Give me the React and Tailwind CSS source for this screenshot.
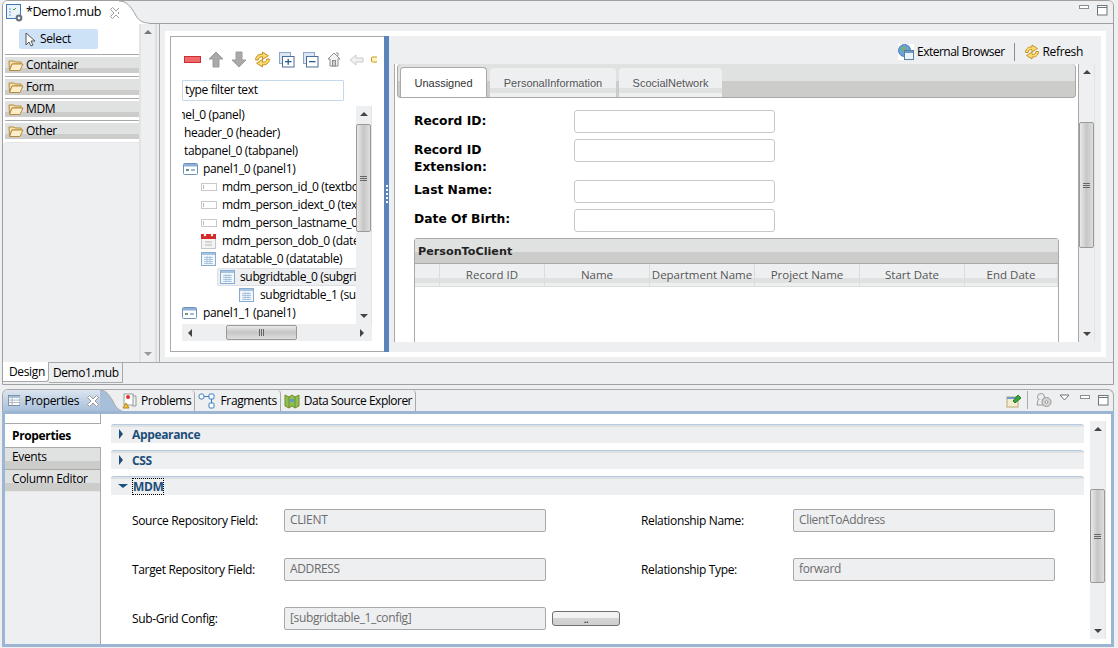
import React from "react";

const F = "[font-family:'Open_Sans',sans-serif] tracking-[-0.35px]";

function Cross({ className = "" }) {
  return (
    <svg width="14" height="14" viewBox="0 0 14 14" className={className}>
      <path d="M1.500 3.500l2-2 3.500 3.500 3.500-3.500 2 2-3.500 3.500 3.500 3.500-2 2-3.500-3.500-3.500 3.500-2-2 3.500-3.500z" fill="#fff" stroke="#9a9a9a" />
    </svg>
  );
}
function Min() {
  return <svg width="11" height="6" viewBox="0 0 11 6"><rect x=".5" y=".5" width="9" height="3" fill="#fff" stroke="#8a8f96" /></svg>;
}
function Max() {
  return <svg width="11" height="11" viewBox="0 0 11 11"><rect x=".5" y=".5" width="9.5" height="9.5" fill="#fff" stroke="#6f757c" /><path d="M1 2.5h9" stroke="#6f757c" /></svg>;
}
function Folder() {
  return (
    <svg width="16" height="14" viewBox="0 0 16 14">
      <path d="M1 3h5l1 1h6v2H4L1.5 12z" fill="#f8e3b0" stroke="#b58b3c" />
      <path d="M1.5 12.500L4 6h11l-3 6.500z" fill="#fbeec9" stroke="#b58b3c" />
    </svg>
  );
}
function Refresh({ s = 17 }) {
  return (
    <svg width={s} height={s} viewBox="0 0 16 16" className="shrink-0">
      <path d="M1.500 8.500C1.500 4.500 5 2.500 8 3V1l5.500 3.500L8 8V5.500C6 5.200 4.500 6 4 8.500z" fill="#fbdc6a" stroke="#c08a1e" strokeWidth=".9" />
      <path d="M14.500 7.500C14.500 11.500 11 13.500 8 13v2l-5.500-3.500L8 8v2.500c2 .3 3.500-.5 4-3z" fill="#fbdc6a" stroke="#c08a1e" strokeWidth=".9" />
    </svg>
  );
}
function PanelIcon() {
  return (
    <svg width="15" height="14" viewBox="0 0 15 14">
      <rect x=".5" y="1.500" width="14" height="11" rx="1" fill="#fff" stroke="#6d93bd" />
      <rect x="1" y="2" width="13" height="2.500" fill="#8fb0d6" />
      <path d="M3 8h3" stroke="#3c6d3c" strokeWidth="1.4" /><path d="M8 8h4" stroke="#7d9fc9" strokeWidth="1.4" />
    </svg>
  );
}
function TextIcon() {
  return <svg width="16" height="8" viewBox="0 0 16 8"><rect x=".5" y=".5" width="15" height="7" fill="#fff" stroke="#c9c9c9" /><path d="M2.500 2v4" stroke="#bbb" /></svg>;
}
function CalIcon() {
  return (
    <svg width="15" height="16" viewBox="0 0 15 16">
      <rect x=".5" y="1.500" width="14" height="14" fill="#f4f4f4" stroke="#c6c6c6" />
      <rect x="0" y="1" width="15" height="5" fill="#d52b2b" />
      <circle cx="4" cy="2" r="1.200" fill="#fff" /><circle cx="11" cy="2" r="1.200" fill="#fff" />
      <path d="M4 9h7M4 12h7" stroke="#b5b5b5" />
    </svg>
  );
}
function TableIcon() {
  return (
    <svg width="15" height="14" viewBox="0 0 15 14">
      <rect x=".5" y=".5" width="14" height="13" fill="#f2f7fc" stroke="#88acd1" />
      <rect x="1" y="1" width="13" height="2" fill="#a6c4e0" />
      <path d="M3 5.500h9M3 7.500h9M3 9.500h9M3 11.500h9M6 4v8M9 4v8" stroke="#9dbbd9" strokeWidth=".8" />
    </svg>
  );
}
function UpArrow({ down }) {
  return (
    <svg width="16" height="17" viewBox="0 0 16 17" className={down ? "rotate-180 shrink-0" : "shrink-0"}>
      <path d="M8 1l7 7h-4v8H5V8H1z" fill="#a9a9a9" stroke="#9c9c9c" />
    </svg>
  );
}
function PlusBox({ minus }) {
  return (
    <svg width="16" height="16" viewBox="0 0 16 16" className="shrink-0 ml-[1px]">
      <rect x=".5" y=".5" width="11" height="11" fill="#dce7f3" stroke="#8aa7c6" />
      <rect x="3.500" y="4.500" width="11.500" height="10.500" fill="#fff" stroke="#4a6f97" />
      <path d="M6 9.700h6.500" stroke="#2c5a88" strokeWidth="1.300" />
      {!minus && <path d="M9.200 6.700v6" stroke="#2c5a88" strokeWidth="1.300" />}
    </svg>
  );
}
function Home() {
  return (
    <svg width="14" height="15" viewBox="0 0 14 15" className="shrink-0 ml-[1px]">
      <path d="M7 1L1 7h2v7h8V7h2zM9 1h2v3" fill="#f3f3f3" stroke="#8f8f8f" />
      <rect x="5.500" y="8.500" width="3" height="5.500" fill="#cfcfcf" stroke="#8f8f8f" />
    </svg>
  );
}
function Scroll({ w = "w-[16px]", thumbTop = 0, thumbH = 100, arrowUp = "border-b-[#444]", arrowDown = "border-t-[#444]" }) {
  return (
    <div className={`${w} bg-[#eeeff1] flex flex-col items-stretch shrink-0 border-r border-[#e2e3e5]`}>
      <div className="h-[16px] flex items-center justify-center shrink-0">
        <div className={`w-0 h-0 border-x-[4px] border-x-transparent border-b-[4px] ${arrowUp}`} />
      </div>
      <div className="flex-1 flex flex-col min-h-0">
        <div style={{ height: thumbTop }} className="shrink-0" />
        {thumbH > 0 && (
          <div style={{ height: thumbH }} className="shrink-0 border border-[#9a9a9a] rounded-[2px] bg-[linear-gradient(to_right,#e9e9e9,#c6c6c6_50%,#dedede)] flex flex-col gap-[1px] items-center justify-center">
            <div className="w-[7px] h-[1px] bg-[#666]" /><div className="w-[7px] h-[1px] bg-[#666]" /><div className="w-[7px] h-[1px] bg-[#666]" />
          </div>
        )}
      </div>
      <div className="h-[16px] flex items-center justify-center shrink-0">
        <div className={`w-0 h-0 border-x-[4px] border-x-transparent border-t-[4px] ${arrowDown}`} />
      </div>
    </div>
  );
}

function PaletteGroup({ label }) {
  return (
    <div className="h-[22px] border-t border-[#a8a8a8] pt-[1px] bg-white">
      <div className="h-[16px] mt-[1px] flex items-center gap-[2px] pl-[3px] bg-[linear-gradient(to_bottom,#e0e1e1_0%,#e0e1e1_68%,#cccccb_68%,#cccccb_100%)]">
        <Folder />
        <span className="text-[12px] text-black leading-none">{label}</span>
      </div>
    </div>
  );
}

function TreeRow({ indent, icon, children, selected, gap = "w-[20px]" }) {
  return (
    <div className="h-[18px] flex items-center whitespace-nowrap relative" style={{ paddingLeft: indent }}>
      {selected ? (
        <div className="flex items-center h-[18px] w-[200px] bg-[#eeeff1] border border-[#dcdfe3] rounded-[2px] -ml-[3px] pl-[2px]">
          <span className="w-[20px] shrink-0 flex">{icon}</span>
          <span className="text-[12px] text-black">{children}</span>
        </div>
      ) : (
        <>
          {icon && <span className={`shrink-0 flex ${gap}`}>{icon}</span>}
          <span className="text-[12px] text-black">{children}</span>
        </>
      )}
    </div>
  );
}

function FormRow({ h, label, mb, pt = "pt-[3px]" }) {
  return (
    <div className={`flex ${h} ${mb}`}>
      <div className={`w-[160px] font-['DejaVu_Sans',sans-serif] font-bold text-[12.3px] tracking-normal leading-[17px] text-black ${pt}`}>{label}</div>
      <div className="w-[201px] h-[23px] bg-white border border-[#c9c9c9] rounded-[3px]" />
    </div>
  );
}

function InnerTab({ label, active, w }) {
  return active ? (
    <div className={`${w} h-[30px] pt-[1px] bg-white border border-b-0 border-[#a9a9a9] rounded-t-[4px] flex items-center justify-center font-['Liberation_Sans',sans-serif] tracking-normal text-[11px] text-[#333]`}>{label}</div>
  ) : (
    <div className={`${w} h-[29px] pt-[1px] mt-[1px] rounded-t-[4px] bg-[linear-gradient(to_bottom,#eeeff1_0%,#eeeff1_68%,#e0e1e1_68%,#e0e1e1_85%,#eeeff1_85%)] flex items-center justify-center font-['Liberation_Sans',sans-serif] tracking-normal text-[11px] text-[#555]`}>{label}</div>
  );
}

function SectionHead({ open, label, focus }) {
  return (
    <div className="h-[19px] border-t border-[#b5cbe2] rounded-t-[3px] bg-[linear-gradient(to_bottom,#dfe0e1_0,#dfe0e1_2px,#eeeff1_2px)] flex items-center pl-[7px]">
      {open ? (
        <div className="w-0 h-0 border-x-[5px] border-x-transparent border-t-[4px] border-t-[#1d4e79] mr-[5px]" />
      ) : (
        <div className="w-0 h-0 border-y-[5px] border-y-transparent border-l-[4px] border-l-[#1d4e79] ml-[1px] mr-[9px]" />
      )}
      <span className={`text-[12px] font-bold text-[#1d4e79] leading-[15px] ${focus ? "outline outline-1 outline-dotted outline-black" : ""}`}>{label}</span>
    </div>
  );
}

function Field({ label, value, w = "w-[152px]", iw = "w-[262px]" }) {
  return (
    <div className="flex items-center h-[23px]">
      <span className={`${w} text-[12px] text-black shrink-0`}>{label}</span>
      <div className={`${iw} h-[23px] bg-[#eeeff1] border border-[#a9a9a9] rounded-[2px] pl-[5px] text-[12px] text-[#6d6d6d] leading-[19px]`}>{value}</div>
    </div>
  );
}

const COLS = ["Record ID", "Name", "Department Name", "Project Name", "Start Date", "End Date"];

export default function App() {
  return (
    <div className={`w-[1118px] h-[648px] bg-[#eeeff1] overflow-hidden flex flex-col ${F}`}>
      {/* editor pane */}
      <div className="mx-[2px] h-[385px] shrink-0 border border-[#a0a0a0] rounded-t-[6px] flex flex-col overflow-hidden w-[1112px]">
        <div className="h-[23px] shrink-0 flex items-stretch relative border-b border-[#a0a0a0] bg-[#eeeff1]">
          <div className="flex items-center bg-white pl-[3px] w-[117px] -mb-[1px] relative z-10 rounded-tl-[5px]">
            <svg width="18" height="18" viewBox="0 0 18 18" className="shrink-0">
              <rect x=".5" y=".5" width="14" height="14" fill="#eaf2fa" stroke="#3b78b5" />
              <path d="M3 5h2M3 8h2M3 11h2" stroke="#7a9cc0" /><path d="M7 5l1 1 2-2" stroke="#3f9f3f" fill="none" />
              <circle cx="13" cy="14" r="3.400" fill="#6a7480" /><circle cx="13" cy="14" r="1.200" fill="#fff" />
            </svg>
            <span className="text-[12.5px] tracking-[-0.45px] text-black ml-[2px] whitespace-nowrap">*Demo1.mub</span>
            <Cross className="ml-[8px] shrink-0" />
          </div>
          <svg width="30" height="23" viewBox="0 0 30 23" className="-ml-[1px] -mb-[1px] relative z-10 shrink-0">
            <path d="M0 0C8 0 12 6 16 13C19 19 23 22 30 22V23H0z" fill="#fff" />
            <path d="M0 0C8 0 12 6 16 13C19 19 23 22 30 22" fill="none" stroke="#a0a0a0" />
          </svg>
          <div className="flex-1" />
          <div className="flex items-start gap-[7px] pr-[5px] pt-[4px]"><Min /><Max /></div>
        </div>

        <div className="flex flex-1 min-h-0">
          {/* palette */}
          <div className="w-[136px] shrink-0 flex flex-col">
            <div className="h-[30px] pt-[5px] pl-[16px] shrink-0 bg-white">
              <div className="w-[79px] h-[20px] bg-[#cde2f6] rounded-[2px] flex items-center pl-[6px] gap-[4px]">
                <svg width="11" height="15" viewBox="0 0 11 15"><path d="M1 1v12l3-3 2 4 2-1-2-4h4z" fill="#fff" stroke="#555" /></svg>
                <span className="text-[12px] text-black">Select</span>
              </div>
            </div>
            <div className="pl-[2px] bg-white">
              <PaletteGroup label="Container" />
              <PaletteGroup label="Form" />
              <PaletteGroup label="MDM" />
              <PaletteGroup label="Other" />
              <div className="border-t border-[#e6e6e6]" />
            </div>
          </div>
          <div className="w-[2px] bg-[#e3e3e3] shrink-0" />
          <Scroll w="w-[15px]" thumbH={0} arrowUp="border-b-[#777]" arrowDown="border-t-[#999]" />
          <div className="w-[3px] border-l border-[#dcdcdc] shrink-0" />
          <div className="w-[1px] bg-[#a9a9a9] shrink-0" />

          {/* design area */}
          <div className="flex-1 flex flex-col pl-[5px] pr-[7px] pt-[7px] min-w-0">
            <div className="h-[326px] bg-white pl-[5px] pr-[5px] pt-[5px] shrink-0">
              <div className="h-[316px] flex">
                {/* outline */}
                <div className="w-[214px] shrink-0 bg-white border-y border-l border-[#a9a9a9] pl-[11px] flex flex-col">
                  <div className="h-[43px] flex items-center gap-[7px] pt-[2px] pl-[2px] overflow-hidden shrink-0 pr-[5px]">
                    <svg width="17" height="7" viewBox="0 0 17 7" className="shrink-0"><rect x=".5" y=".5" width="16" height="6" fill="#ee6a6a" stroke="#d02f2f" /></svg>
                    <UpArrow /><UpArrow down />
                    <Refresh />
                    <PlusBox /><PlusBox minus />
                    <Home />
                    <svg width="15" height="12" viewBox="0 0 15 12" className="shrink-0 ml-[1px]"><path d="M7 1L1 6l6 5V8h7V4H7z" fill="#f1f1f1" stroke="#c9c9c9" /></svg>
                    <svg width="6" height="7" viewBox="0 0 6 7" className="shrink-0"><rect x=".5" y="1" width="8" height="5" rx="1" fill="#fff3c0" stroke="#c79a1e" /></svg>
                  </div>
                  <div className="w-[162px] h-[21px] border border-[#c6d9ea] rounded-[1px] text-[12px] text-black pl-[2px] leading-[18px] shrink-0">type filter text</div>
                  <div className="flex mt-[5px] h-[218px] shrink-0 w-[190px]">
                    <div className="w-[174px] overflow-hidden shrink-0">
                      <div className="-ml-[22px] w-[300px]">
                        <TreeRow indent={5}>panel_0 (panel)</TreeRow>
                        <TreeRow indent={24}>header_0 (header)</TreeRow>
                        <TreeRow indent={24}>tabpanel_0 (tabpanel)</TreeRow>
                        <TreeRow indent={23} icon={<PanelIcon />}>panel1_0 (panel1)</TreeRow>
                        <TreeRow indent={41} gap="w-[21px]" icon={<TextIcon />}>mdm_person_id_0 (textbox)</TreeRow>
                        <TreeRow indent={41} gap="w-[21px]" icon={<TextIcon />}>mdm_person_idext_0 (textbox)</TreeRow>
                        <TreeRow indent={41} gap="w-[21px]" icon={<TextIcon />}>mdm_person_lastname_0 (textbox)</TreeRow>
                        <TreeRow indent={41} gap="w-[21px]" icon={<CalIcon />}>mdm_person_dob_0 (date)</TreeRow>
                        <TreeRow indent={41} gap="w-[21px]" icon={<TableIcon />}>datatable_0 (datatable)</TreeRow>
                        <TreeRow indent={60} icon={<TableIcon />} selected>subgridtable_0 (subgridtable)</TreeRow>
                        <TreeRow indent={79} gap="w-[21px]" icon={<TableIcon />}>subgridtable_1 (subgridtable)</TreeRow>
                        <TreeRow indent={22} gap="w-[21px]" icon={<PanelIcon />}>panel1_1 (panel1)</TreeRow>
                      </div>
                    </div>
                    <Scroll thumbTop={2} thumbH={108} />
                  </div>
                  <div className="h-[17px] w-[190px] bg-[#eeeff1] flex items-center shrink-0">
                    <div className="w-[16px] flex justify-center"><div className="w-0 h-0 border-y-[4px] border-y-transparent border-r-[4px] border-r-[#444]" /></div>
                    <div className="w-[28px]" />
                    <div className="w-[71px] h-[15px] border border-[#9a9a9a] rounded-[2px] bg-[linear-gradient(to_bottom,#e9e9e9,#c6c6c6_50%,#dedede)] flex items-center justify-center gap-[1px]">
                      <div className="w-[1px] h-[7px] bg-[#666]" /><div className="w-[1px] h-[7px] bg-[#666]" /><div className="w-[1px] h-[7px] bg-[#666]" />
                    </div>
                    <div className="flex-1" />
                    <div className="w-[20px] flex justify-center"><div className="w-0 h-0 border-y-[4px] border-y-transparent border-l-[4px] border-l-[#444]" /></div>
                  </div>
                </div>
                {/* sash */}
                <div className="w-[5px] shrink-0 bg-[#5b84bd] flex flex-col items-center justify-center gap-[2px]">
                  <div className="w-[2px] h-[2px] bg-white" /><div className="w-[2px] h-[2px] bg-white" /><div className="w-[2px] h-[2px] bg-white" /><div className="w-[2px] h-[2px] bg-white" /><div className="w-[2px] h-[2px] bg-white" />
                </div>
                {/* preview */}
                <div className="flex-1 bg-[#eeeff1] flex flex-col min-w-0">
                  <div className="h-[28px] shrink-0 flex items-center justify-end pr-[18px] pt-[4px]">
                    <span className="bg-white flex mr-[3px]">
                      <svg width="16" height="16" viewBox="0 0 16 16">
                        <circle cx="6.500" cy="6.500" r="6" fill="#6aa3d8" stroke="#4a7cae" /><path d="M3 4l3-2 2 3-3 3zM8 8l3 1-2 3z" fill="#7fb069" />
                        <rect x="6.500" y="6.500" width="9" height="9" fill="#eaf3fb" stroke="#5c7f9f" /><rect x="7" y="7" width="8" height="2" fill="#6c9bc9" />
                      </svg>
                    </span>
                    <span className="text-[12px] tracking-[-0.5px] text-black">External Browser</span>
                    <span className="w-[1px] h-[18px] bg-[#8d8d8d] mx-[9px]" />
                    <Refresh s={16} />
                    <span className="text-[12px] text-black ml-[3px]">Refresh</span>
                  </div>
                  <div className="flex flex-1 min-h-0 pl-[5px] overflow-hidden">
                    <div className="w-[684px] shrink-0 bg-white border-l border-[#a9a9a9] overflow-hidden h-[278px]">
                      <div className="h-[34px] ml-[2px] border border-t-0 border-[#a9a9a9] rounded-[4px] bg-[linear-gradient(to_bottom,#e0e1e1_0%,#e0e1e1_52%,#cccccb_52%,#cccccb_100%)] flex items-start gap-[3px] pl-[2px] pt-[3px] w-[679px]">
                        <InnerTab label="Unassigned" active w="w-[87px]" />
                        <InnerTab label="PersonalInformation" w="w-[126px]" />
                        <InnerTab label="ScocialNetwork" w="w-[103px]" />
                      </div>
                      <div className="pl-[19px] pt-[12px]">
                        <FormRow h="h-[23px]" label="Record ID:" mb="mb-[6px]" />
                        <FormRow h="h-[35px]" label={<>Record ID<br />Extension:</>} mb="mb-[6px]" />
                        <FormRow h="h-[23px]" label="Last Name:" mb="mb-[6px]" pt="pt-[2px]" />
                        <FormRow h="h-[23px]" label="Date Of Birth:" mb="mb-[6px]" pt="pt-[2px]" />
                        <div className="w-[645px] h-[130px] border border-[#a9a9a9] rounded-t-[3px] bg-white">
                          <div className="h-[25px] bg-[linear-gradient(to_bottom,#e0e1e1_0%,#e0e1e1_55%,#cccccb_55%,#cccccb_100%)] border-b border-[#a9a9a9] flex items-center pl-[3px] pt-[2px] font-['DejaVu_Sans',sans-serif] font-bold text-[11.2px] tracking-normal text-[#222]">PersonToClient</div>
                          <div className="h-[23px] flex border-b border-[#dcdcdc] bg-[linear-gradient(to_bottom,#eeeff1_0%,#eeeff1_62%,#e0e1e1_62%,#e0e1e1_88%,#eeeff1_88%)]">
                            <div className="w-[25px] shrink-0 border-r border-[#dcdcdc]" />
                            {COLS.map((c, i) => (
                              <div key={c} className={`${i === 5 ? "w-[93px]" : "w-[105px]"} shrink-0 border-r border-[#dcdcdc] overflow-hidden whitespace-nowrap text-center pt-[2px] text-[11.5px] tracking-normal text-[#555] leading-[17px]`}>{c}</div>
                            ))}
                          </div>
                        </div>
                      </div>
                    </div>
                    <div className="h-[278px] flex border-l border-[#a9a9a9]">
                      <Scroll w="w-[16px]" thumbTop={42} thumbH={126} />
                    </div>
                  </div>
                  <div className="h-[9px] shrink-0" />
                </div>
              </div>
            </div>
          </div>
        </div>

        {/* bottom tabs */}
        <div className="h-[22px] shrink-0 border-t border-[#a9a9a9] flex items-stretch bg-[#eeeff1]">
          <div className="h-[20px] w-[46px] -mt-[1px] pt-[1px] pl-[6px] bg-white border-r border-b border-[#a9a9a9] rounded-br-[3px] flex items-center text-[12px] text-black">Design</div>
          <div className="h-[20px] w-[74px] pl-[4px] border-r border-b border-[#a9a9a9] flex items-center text-[12px] tracking-[-0.45px] text-black">Demo1.mub</div>
        </div>
      </div>

      <div className="h-[4px] shrink-0" />

      {/* properties pane */}
      <div className="ml-[2px] w-[1112px] flex-1 min-h-0 flex flex-col">
        <div className="h-[22px] shrink-0 flex items-stretch relative border border-b-0 border-[#a9a9a9] rounded-t-[6px]">
          <div className="w-[97px] rounded-tl-[5px] bg-[linear-gradient(to_bottom,#dbe5f0,#a8bfda)] flex items-center pl-[5px]">
            <svg width="15" height="13" viewBox="0 0 15 13"><rect x=".5" y=".5" width="14" height="12" fill="#fff" stroke="#6b7f94" /><rect x="1" y="1" width="13" height="2.500" fill="#a9c0d8" /><path d="M1 6h13M1 9h13M5 3v9" stroke="#9aa9b8" /></svg>
            <span className="text-[12px] text-black ml-[4px]">Properties</span>
            <Cross className="ml-[7px] shrink-0" />
          </div>
          <svg width="22" height="21" viewBox="0 0 22 21" className="shrink-0">
            <path d="M0 0C6 0 9 5 13 11C15 16 18 20 22 21H0z" fill="#a8bfda" />
            <path d="M0 0C6 0 9 5 13 11C15 16 18 20 22 21" fill="none" stroke="#a9a9a9" />
          </svg>
          <div className="flex items-center pr-[3px] border-r border-[#a9a9a9] rounded-tr-[4px] h-[21px] gap-[3px]">
            <svg width="16" height="16" viewBox="0 0 16 16"><rect x="2" y="1" width="9" height="11" fill="#fff" stroke="#9a9a9a" /><circle cx="6" cy="4" r="2" fill="#d33" /><path d="M1 15l3-5 3 5z" fill="#f0c040" stroke="#b58a20" /><path d="M11 3h3v10h-4" fill="none" stroke="#9a9a9a" /></svg>
            <span className="text-[12px] text-black">Problems</span>
          </div>
          <div className="flex items-center pl-[3px] pr-[3px] border-r border-[#a9a9a9] rounded-tr-[4px] h-[21px] gap-[4px]">
            <svg width="18" height="18" viewBox="0 0 18 18" fill="#fff" stroke="#3f7fc0"><rect x="1" y="2" width="5" height="5" rx="2" /><rect x="11" y="2" width="5" height="5" rx="1" /><rect x="11" y="11" width="5" height="5" rx="1" /><path d="M6 4.500h5M13.500 7v4" /></svg>
            <span className="text-[12px] text-black">Fragments</span>
          </div>
          <div className="flex items-center pl-[3px] pr-[3px] border-r border-[#a9a9a9] rounded-tr-[4px] h-[21px] gap-[4px]">
            <svg width="16" height="16" viewBox="0 0 16 16"><path d="M1 2l4 2 3-2 3 2 4-2v11l-4 2-3-2-3 2-4-2z" fill="#8cc152" stroke="#7a8a2a" /><path d="M5 4v11M11 4v11" stroke="#7a8a2a" /><rect x="6" y="6" width="4" height="3" fill="#5a9fd4" /></svg>
            <span className="text-[12px] tracking-[-0.5px] text-black whitespace-nowrap">Data Source Explorer</span>
          </div>
          <div className="flex-1" />
          <div className="flex items-center gap-[6px] pr-[4px] h-[20px]">
            <svg width="16" height="16" viewBox="0 0 16 16"><rect x="1" y="5" width="11" height="10" fill="#f5ecd2" stroke="#b9a878" /><rect x="1" y="5" width="11" height="2" fill="#6c9bc9" /><path d="M7 9l5-6 3 3-6 5z" fill="#3aa53a" stroke="#2a7a2a" /></svg>
            <span className="w-[1px] h-[18px] bg-[#a9a9a9] -ml-[1px] mr-[1px]" />
            <svg width="18" height="16" viewBox="0 0 18 16" fill="#eee" stroke="#9a9a9a"><circle cx="6" cy="5" r="3.500" /><path d="M3 8l-1 5h7l-1-5" /><circle cx="11.500" cy="10" r="4.500" fill="#d4d4d4" /><circle cx="11.500" cy="10" r="1.300" fill="#fff" /></svg>
            <svg width="11" height="7" viewBox="0 0 11 7" className="mb-[5px]"><path d="M1 1h9L5.500 6z" fill="#fff" stroke="#6f757c" /></svg>
            <span className="ml-[4px] flex pb-[5px]"><Min /></span>
            <span className="ml-[1px] flex"><Max /></span>
          </div>
        </div>
        <div className="flex-1 min-h-0 border-[3px] border-[#9cb5d3] bg-white flex overflow-hidden">
          {/* side tabs */}
          <div className="w-[96px] shrink-0 bg-[#eeeff1] border-r border-[#a9a9a9] flex flex-col">
            <div className="h-[10px] bg-white border-b border-[#a9a9a9] shrink-0" />
            <div className="h-[23px] bg-white flex items-center pl-[7px] text-[12px] font-bold text-black shrink-0 -mr-[1px] relative">Properties</div>
            <div className="h-[22px] border-t border-[#a9a9a9] pl-[7px] text-[12px] text-black leading-[17px] bg-[linear-gradient(to_bottom,#e0e1e1_0%,#e0e1e1_60%,#cccccb_60%)] shrink-0">Events</div>
            <div className="h-[22px] border-t border-[#a9a9a9] pl-[7px] text-[12px] text-black leading-[17px] bg-[linear-gradient(to_bottom,#e0e1e1_0%,#e0e1e1_60%,#cccccb_60%)] shrink-0">Column Editor</div>
            <div className="border-t border-[#e6e6e6]" />
          </div>
          <div className="flex-1 flex min-w-0">
            <div className="w-[989px] shrink-0 pl-[10px] pt-[10px]">
              <div className="w-[973px] flex flex-col gap-[7px]">
                <SectionHead label="Appearance" />
                <SectionHead label="CSS" />
                <SectionHead label="MDM" open focus />
              </div>
              <div className="pl-[21px] pt-[14px] flex flex-col gap-[26px]">
                <div className="flex">
                  <div className="w-[509px]"><Field label="Source Repository Field:" value="CLIENT" /></div>
                  <Field label="Relationship Name:" value="ClientToAddress" />
                </div>
                <div className="flex">
                  <div className="w-[509px]"><Field label="Target Repository Field:" value="ADDRESS" /></div>
                  <Field label="Relationship Type:" value="forward" />
                </div>
                <div className="flex items-center">
                  <Field label="Sub-Grid Config:" value="[subgridtable_1_config]" />
                  <button className="ml-[6px] w-[68px] h-[15px] border border-[#707070] rounded-[3px] bg-[linear-gradient(to_bottom,#f2f2f2,#f2f2f2_45%,#d5d5d5_45%,#cfcfcf)] text-[10px] leading-[10px] text-black">..</button>
                </div>
              </div>
            </div>
            <div className="flex flex-col pt-[7px] pb-[5px]">
              <div className="flex-1 flex min-h-0">
                <Scroll thumbTop={52} thumbH={94} />
              </div>
            </div>
          </div>
        </div>
      </div>
      <div className="h-[1px] shrink-0" />
    </div>
  );
}
